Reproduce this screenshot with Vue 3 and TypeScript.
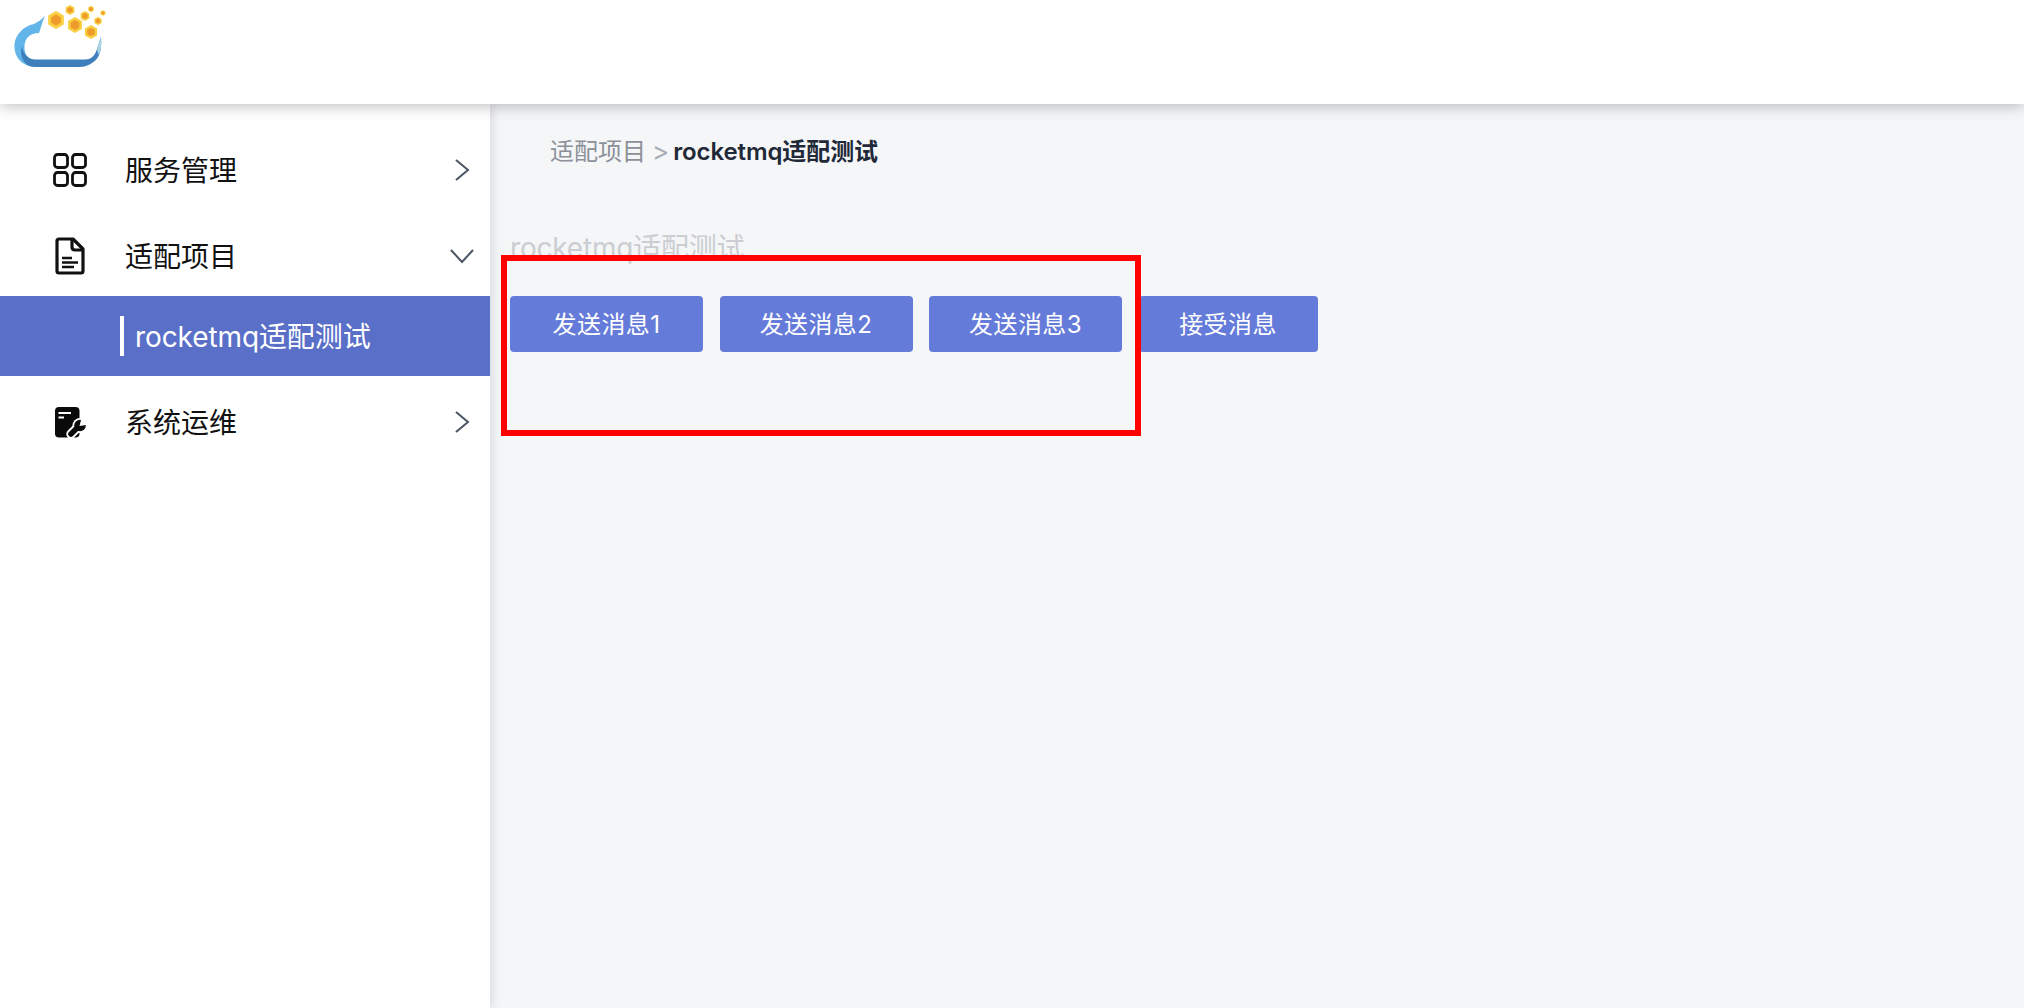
<script setup lang="ts">
const buttons: string[] = ['发送消息1', '发送消息2', '发送消息3', '接受消息']
const hexes: [number, number, number][] = [
  [56, 20, 9], [70, 10, 5], [75, 25, 8], [85, 16, 5],
  [91, 32, 7], [91, 9, 3.2], [98, 21, 4.2], [103, 13, 2.8],
]
function hex(cx: number, cy: number, r: number): string {
  const pts: string[] = []
  for (let i = 0; i < 6; i++) {
    const a = (Math.PI / 3) * i - Math.PI / 2
    pts.push(`${(cx + r * Math.cos(a)).toFixed(2)},${(cy + r * Math.sin(a)).toFixed(2)}`)
  }
  return pts.join(' ')
}
</script>

<template>
  <div class="page">
    <header class="top">
      <svg class="logo" width="130" height="80" viewBox="0 0 130 80">
        <path d="M45 16 C42 22 41 28 39 33 C30 33 25 38 24.500 46 C24 53 27 59 35 60 L36 67 C25 67 15 60 14.500 47 C14 36 23 26 34 24 C38 22 42 19 45 16Z" fill="#62b5e8" />
        <path d="M22 46 C23 53 27 59 34 59.500 L85 59.500 C92 59.500 95 55 97 49 L101 37 C102 50 100 58 92 63 C87 66.500 83 67 78 67 L36 67 C24 67 19 56 22 46Z" fill="#3f7fbc" />
        <path d="M97 49 C98 45 100 41 100.500 37 C101.500 44 101.500 50 98.500 55 C98 53 97.500 51 97 49Z" fill="#a8d4e4" />
        <g v-for="(h, i) in hexes" :key="i">
          <polygon :points="hex(h[0], h[1], h[2])" fill="#f7cf3f" />
          <polygon :points="hex(h[0], h[1], h[2] * 0.62)" fill="#ee9b2c" />
        </g>
      </svg>
    </header>
    <div class="body">
      <aside class="side">
        <div class="item gap">
          <svg class="icon" width="34" height="34" viewBox="0 0 34 34" fill="none" stroke="#111" stroke-width="2.800">
            <rect x="1.500" y="1.500" width="13" height="13" rx="3" />
            <rect x="19.500" y="1.500" width="13" height="13" rx="3" />
            <rect x="1.500" y="19.500" width="13" height="13" rx="3" />
            <rect x="19.500" y="19.500" width="13" height="13" rx="3" />
          </svg>
          <span class="label">服务管理</span>
          <svg class="chev" width="24" height="24" viewBox="0 0 24 24" fill="none" stroke="#4b5563" stroke-width="2">
            <path d="M6 2 L18 12 L6 22" />
          </svg>
        </div>
        <div class="item">
          <svg class="icon" width="34" height="38" viewBox="0 0 34 38" fill="none" stroke="#111" stroke-width="3.200" stroke-linejoin="round">
            <path d="M6 2 H20 L30 12 V34 Q30 36 28 36 H6 Q4 36 4 34 V4 Q4 2 6 2Z" />
            <path d="M19 2 V10 Q19 13 22 13 H30" />
            <path d="M9 21 H19 M9 25.500 H25 M9 30 H21" stroke-width="2.400" />
          </svg>
          <span class="label">适配项目</span>
          <svg class="chev" width="24" height="24" viewBox="0 0 24 24" fill="none" stroke="#4b5563" stroke-width="2">
            <path d="M1 6 L12 18 L23 6" />
          </svg>
        </div>
        <div class="sub">
          <span class="bar"></span>
          <span class="sub-label">rocketmq适配测试</span>
        </div>
        <div class="item">
          <svg class="icon" width="34" height="34" viewBox="0 0 34 34">
            <g transform="translate(2 2)">
              <rect x="0" y="0" width="24.500" height="30.500" rx="4" fill="#0a0a0a" />
              <path d="M3.500 6 H16 M3.500 10.500 H9" stroke="#fff" stroke-width="1.800" fill="none" />
              <path d="M16 27 L23 20" stroke="#fff" stroke-width="9.500" stroke-linecap="round" />
              <circle cx="25" cy="18.500" r="7.500" fill="#fff" />
              <path d="M16 27 L23 20" stroke="#0a0a0a" stroke-width="5.500" stroke-linecap="round" />
              <circle cx="25" cy="18.500" r="5.800" fill="#0a0a0a" />
              <path d="M24.500 19 L26 13 L32 13 L31 18Z" fill="#fff" />
            </g>
          </svg>
          <span class="label">系统运维</span>
          <svg class="chev" width="24" height="24" viewBox="0 0 24 24" fill="none" stroke="#4b5563" stroke-width="2">
            <path d="M6 2 L18 12 L6 22" />
          </svg>
        </div>
      </aside>
      <main class="main">
        <div class="crumb">
          <span class="crumb-link">适配项目</span>
          <span class="crumb-sep">&gt;</span>
          <span class="crumb-now">rocketmq适配测试</span>
        </div>
        <div class="title">rocketmq适配测试</div>
        <div class="btns">
          <button v-for="b in buttons" :key="b" class="btn" type="button">{{ b }}</button>
        </div>
      </main>
    </div>
    <div class="mark"></div>
  </div>
</template>

<style scoped>
.page {
  position: relative;
  display: flex;
  flex-direction: column;
  width: 2024px;
  height: 1008px;
  overflow: hidden;
  background: #f5f6f8;
  font-family: Inter, "Noto Sans CJK SC", sans-serif;
}
.top {
  position: relative;
  z-index: 2;
  flex: 0 0 104px;
  height: 104px;
  background: #fff;
  box-shadow: 0 2px 14px rgba(0, 0, 0, 0.26);
}
.logo {
  display: block;
  filter: blur(0.4px);
}
.body {
  flex: 1;
  display: flex;
  min-height: 0;
}
.side {
  position: relative;
  z-index: 1;
  flex: 0 0 490px;
  width: 490px;
  padding-top: 26px;
  box-sizing: border-box;
  background: #fff;
  box-shadow: 2px 0 10px rgba(0, 0, 0, 0.12);
}
.item {
  display: flex;
  align-items: center;
  height: 80px;
  padding-left: 53px;
  padding-right: 16px;
}
.gap {
  margin-bottom: 6px;
}
.icon {
  flex: 0 0 34px;
}
.label {
  margin-left: 38px;
  padding-bottom: 2px;
  font-size: 28px;
  color: #111;
}
.chev {
  margin-left: auto;
}
.sub {
  display: flex;
  align-items: center;
  height: 80px;
  margin-bottom: 6px;
  padding-left: 120px;
  background: #5a6fc7;
}
.bar {
  width: 4px;
  height: 40px;
  background: #fff;
}
.sub-label {
  margin-left: 11px;
  padding-bottom: 2px;
  font-size: 28px;
  letter-spacing: -0.1px;
  color: #fff;
}
.main {
  flex: 1;
  padding: 30px 0 0 20px;
}
.crumb {
  display: flex;
  align-items: center;
  height: 36px;
  margin-left: 40px;
  font-size: 24px;
  line-height: 36px;
}
.crumb-link {
  color: #8c9099;
}
.crumb-sep {
  margin: 0 4px 0 6px;
  font-size: 26px;
  color: #a9adb5;
}
.crumb-now {
  font-weight: 600;
  color: #1f2937;
  letter-spacing: -0.1px;
}
.title {
  height: 40px;
  margin-top: 58px;
  font-size: 28px;
  letter-spacing: -0.2px;
  line-height: 40px;
  color: #cbcdd2;
}
.btns {
  display: flex;
  gap: 16.500px;
  margin-top: 28px;
}
.btn {
  width: 193px;
  height: 56px;
  padding: 0 0 4px;
  border: none;
  border-radius: 4px;
  background: #657bd9;
  color: #fff;
  font-family: inherit;
  font-size: 24px;
  letter-spacing: 0.4px;
}
.btn:last-child {
  width: 179px;
}
.mark {
  position: absolute;
  left: 501px;
  top: 255px;
  width: 640px;
  height: 181px;
  box-sizing: border-box;
  border: 6px solid #fe0000;
}
</style>
